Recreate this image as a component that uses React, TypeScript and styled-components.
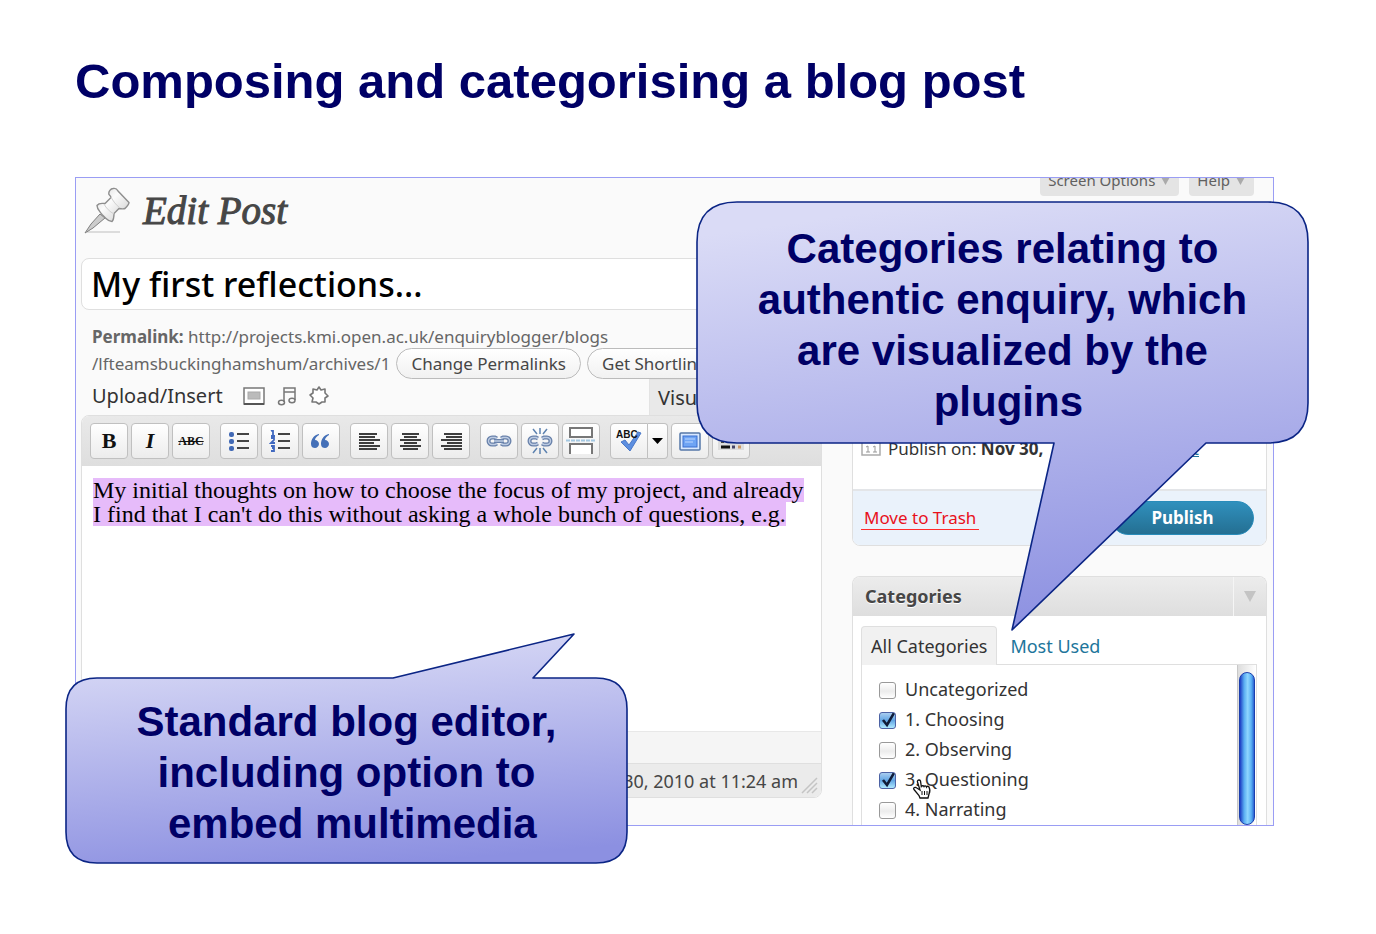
import React, { useState } from "react";
import styled, { createGlobalStyle } from "styled-components";

const UI_FONT = `"Noto Sans", "Open Sans", sans-serif`;
const SLIDE_FONT = `"Liberation Sans", Arial, sans-serif`;
const NAVY = "#000066";

const GlobalStyle = createGlobalStyle`
  *, *::before, *::after { box-sizing: border-box; }
  body { margin: 0; background: #fff; }
  button, input { font: inherit; color: inherit; }
`;

const Slide = styled.main`
  padding: 53px 102px 72px 75px;
  font-family: ${SLIDE_FONT};
`;

const SlideTitle = styled.h1`
  margin: 0 0 68px;
  font-size: 49px;
  line-height: 56px;
  font-weight: 700;
  color: ${NAVY};
`;

const Figure = styled.section`
  position: relative;
`;

const Screen = styled.div`
  border: 1px solid #9a9df4;
  background: #fafafa;
  font-family: ${UI_FONT};
  font-size: 17px;
  color: #333;
  overflow: hidden;
`;

const ScreenHeader = styled.header`
  display: flex;
  justify-content: space-between;
  align-items: flex-start;
  height: 80px;
  padding: 0 19px 0 8px;
`;

const PageHeading = styled.h2`
  display: flex;
  align-items: center;
  gap: 13px;
  margin: 8px 0 0;
  font-family: "Liberation Serif", Georgia, serif;
  font-size: 39px;
  line-height: 50px;
  font-style: italic;
  font-weight: 400;
  color: #464646;
  -webkit-text-stroke: 1px #464646;
`;

const MetaTabs = styled.div`
  display: flex;
  align-items: flex-end;
  gap: 10px;
  height: 18px;
`;

const MetaTab = styled.button`
  display: flex;
  align-items: center;
  gap: 5px;
  padding: 0 8px 5px;
  border: 0;
  border-radius: 0 0 4px 4px;
  background: #e4e4e4;
  font-size: 15px;
  line-height: 22px;
  color: #606060;
`;

const Columns = styled.div`
  display: grid;
  grid-template-columns: minmax(0, 1fr) 415px;
  gap: 30px;
  padding: 0 6px 0 5px;
`;

const MainColumn = styled.div`
  padding-bottom: 27px;
`;

const TitleInput = styled.input`
  display: block;
  width: 100%;
  height: 52px;
  margin-bottom: 13px;
  padding: 0 9px;
  border: 1px solid #dfdfdf;
  border-radius: 8px;
  background: #fff;
  font-size: 34px;
  font-weight: 500;
  color: #000;
`;

const Permalink = styled.div`
  padding-left: 11px;
  line-height: 27px;
  color: #666;
`;

const PermalinkRow = styled.div`
  display: flex;
  align-items: center;
  gap: 6px;
  height: 27px;
`;

const PillButton = styled.button`
  flex: none;
  height: 31px;
  padding: 0 14px;
  border: 1px solid #bbb;
  border-radius: 16px;
  background: linear-gradient(#fff, #f1f1f1);
  line-height: 27px;
  color: #464646;
`;

const MediaRow = styled.div`
  display: flex;
  align-items: center;
  height: 38px;
  padding-left: 11px;
  font-size: 20px;
`;

const MediaLabel = styled.span`
  margin-right: 20px;
  line-height: 36px;
  color: #333;
`;

const IconButton = styled.button`
  display: flex;
  margin-right: 12px;
  padding: 0;
  border: 0;
  background: none;
`;

const EditorTabs = styled.div`
  align-self: flex-end;
  width: 173px;
  margin-left: auto;
`;

const EditorTab = styled.button`
  height: 36px;
  padding: 0 8px;
  border: 1px solid #e3e3e3;
  border-bottom: 0;
  background: #e9e9e9;
  color: #333;
`;

const Editor = styled.div`
  border: 1px solid #dfdfdf;
  border-radius: 8px;
  background: #fff;
  overflow: hidden;
`;

const Toolbar = styled.div`
  display: flex;
  align-items: center;
  gap: 10px;
  height: 50px;
  padding: 0 8px;
  background: linear-gradient(#e9e9e9, #dedede);
`;

const ToolGroup = styled.div<{ $gap?: number }>`
  display: flex;
  gap: ${(p) => p.$gap ?? 3}px;
`;

const ToolButton = styled.button<{ $side?: "left" | "right" }>`
  display: flex;
  align-items: center;
  justify-content: center;
  width: ${(p) => (p.$side === "right" ? 20 : 38)}px;
  height: 36px;
  padding: 0;
  border: 1px solid #c0c0c0;
  border-left-width: ${(p) => (p.$side === "right" ? 0 : 1)}px;
  border-radius: ${(p) =>
    p.$side === "left" ? "4px 0 0 4px" : p.$side === "right" ? "0 4px 4px 0" : "4px"};
  background: linear-gradient(#fff, #ececec);
`;

const Glyph = styled.span<{ $italic?: boolean; $small?: boolean }>`
  font-family: "Liberation Serif", serif;
  font-size: ${(p) => (p.$small ? 12 : 22)}px;
  line-height: 24px;
  font-weight: 700;
  font-style: ${(p) => (p.$italic ? "italic" : "normal")};
  text-decoration: ${(p) => (p.$small ? "line-through" : "none")};
  color: #111;
`;

const EditArea = styled.div`
  height: 265px;
  padding: 12px 11px;
  font-family: "Liberation Serif", "Times New Roman", serif;
  font-size: 24px;
  line-height: 24px;
  color: #000;
  outline: none;
`;

const SelectedLine = styled.mark`
  display: block;
  width: fit-content;
  background: #e6bbfa;
  color: inherit;
  white-space: nowrap;
`;

const PathBar = styled.div`
  height: 32px;
  border-top: 1px solid #e8e8e8;
  background: #f5f5f5;
`;

const StatusBar = styled.div`
  display: flex;
  align-items: center;
  justify-content: flex-end;
  height: 34px;
  padding: 0 2px 0 11px;
  border-top: 1px solid #dfdfdf;
  background: #ebebeb;
  gap: 3px;
  font-size: 18px;
  color: #464646;
`;

const SideColumn = styled.aside`
  display: flex;
  flex-direction: column;
  gap: 30px;
`;

const PublishBox = styled.section`
  display: flex;
  flex-direction: column;
  justify-content: flex-end;
  height: 288px;
  border: 1px solid #dfdfdf;
  border-radius: 8px;
  background: #fff;
  overflow: hidden;
`;

const ScheduleRow = styled.div`
  display: flex;
  align-items: center;
  gap: 7px;
  height: 24px;
  margin-bottom: 29px;
  padding: 0 67px 0 8px;
`;

const ScheduleTime = styled.b`
  margin-left: 11px;
`;

const EditLink = styled.a`
  margin-left: auto;
  color: #21759b;
`;

const PublishFooter = styled.footer`
  display: flex;
  align-items: center;
  justify-content: space-between;
  height: 56px;
  padding: 0 12px 0 8px;
  border-top: 2px solid #e3e5e8;
  background: #eaf2fb;
`;

const TrashLink = styled.a`
  padding: 0 3px;
  border-bottom: 1px solid #ff2b2b;
  line-height: 23px;
  text-decoration: none;
  color: #e8111c;
`;

const PublishButton = styled.button`
  width: 143px;
  height: 34px;
  padding: 0;
  border: 1px solid #298cba;
  border-radius: 17px;
  background: linear-gradient(#3090bd, #246f92);
  font-weight: 700;
  line-height: 30px;
  color: #fff;
`;

const CategoryBox = styled.section`
  flex: 1;
  border: 1px solid #dfdfdf;
  border-bottom: 0;
  border-radius: 8px 8px 0 0;
  background: #fff;
`;

const BoxHeader = styled.header`
  display: flex;
  align-items: stretch;
  justify-content: space-between;
  height: 39px;
  border-radius: 7px 7px 0 0;
  background: linear-gradient(#ececec, #dedede);
`;

const BoxTitle = styled.h3`
  margin: 0;
  padding-left: 12px;
  font-size: 18px;
  line-height: 38px;
  font-weight: 700;
  color: #464646;
  text-shadow: 0 1px 0 #fff;
`;

const BoxToggle = styled.button`
  display: flex;
  align-items: center;
  justify-content: center;
  width: 33px;
  padding: 0;
  border: 0;
  border-left: 1px solid #f5f5f5;
  background: none;
`;

const CategoryTabs = styled.div`
  display: flex;
  padding: 10px 9px 0 8px;
  font-size: 18px;
`;

const CategoryTab = styled.button<{ $active?: boolean }>`
  height: 39px;
  margin-bottom: -1px;
  padding: 0 ${(p) => (p.$active ? 9 : 12)}px;
  border: 1px solid ${(p) => (p.$active ? "#dfdfdf" : "transparent")};
  border-bottom: 0;
  border-radius: 4px 4px 0 0;
  background: ${(p) => (p.$active ? "#f1f1f1" : "transparent")};
  color: ${(p) => (p.$active ? "#333" : "#21759b")};
`;

const CategoryPanel = styled.div`
  display: flex;
  justify-content: space-between;
  margin: 0 9px 0 8px;
  border: 1px solid #dfdfdf;
  border-bottom: 0;
`;

const CategoryList = styled.ul`
  margin: 0;
  padding: 9px 0 1px 17px;
  list-style: none;
`;

const CategoryItem = styled.li`
  position: relative;
`;

const CategoryLabel = styled.label`
  display: flex;
  align-items: center;
  gap: 9px;
  height: 30px;
  font-size: 18px;
  line-height: 30px;
  color: #333;
`;

const CHECK = `url("data:image/svg+xml,%3Csvg xmlns='http://www.w3.org/2000/svg' viewBox='0 0 17 17'%3E%3Cpath d='M4 8l4 5L15 1' fill='none' stroke='%23101c38' stroke-width='2.6'/%3E%3C/svg%3E")`;

const CheckBox = styled.input`
  appearance: none;
  width: 17px;
  height: 17px;
  margin: 3px 0 0;
  border: 1px solid #999;
  border-radius: 3px;
  background: linear-gradient(#fff, #ececec 55%, #fff);
  &:checked {
    border-color: #4c62a4;
    background: ${CHECK} center / 17px 17px, linear-gradient(#a9cdf0, #62a6e4 50%, #aee9ff);
  }
`;

const HandCursor = styled.svg`
  position: absolute;
  left: 33px;
  top: 15px;
  z-index: 1;
`;

const ScrollTrack = styled.div`
  width: 19px;
  padding: 7px 1px 0;
  border-left: 1px solid #c8c8c8;
  background: linear-gradient(90deg, #ddd, #fff);
`;

const ScrollThumb = styled.div`
  height: 100%;
  border: 1px solid #1c3fae;
  border-radius: 9px;
  background: linear-gradient(90deg, #1d3cc4, #5aaef2 30%, #8fd6ff 55%, #5bb2f4 80%, #2a63d4);
`;

const Callout = styled.aside<{ $w: number; $h: number; $pad: string }>`
  position: absolute;
  z-index: 2;
  width: ${(p) => p.$w}px;
  height: ${(p) => p.$h}px;
  padding: ${(p) => p.$pad};
`;

const CategoriesCallout = styled(Callout)`
  top: 24px;
  right: -35px;
`;

const EditorCallout = styled(Callout)`
  top: 456px;
  left: -10px;
`;

const Balloon = styled.svg`
  position: absolute;
  inset: 0;
`;

const CalloutText = styled.p`
  position: relative;
  margin: 0;
  font-size: 42px;
  line-height: 51px;
  font-weight: 700;
  text-align: center;
  white-space: pre-line;
  color: ${NAVY};
`;

const Pin = () => (
  <svg width="46" height="48" viewBox="0 0 46 48" aria-hidden="true">
    <defs>
      <linearGradient id="pin" x1="0" y1="0" x2="1" y2="1">
        <stop offset="0" stopColor="#d4d4d4" />
        <stop offset=".4" stopColor="#fbfbfb" />
        <stop offset=".7" stopColor="#e2e2e2" />
        <stop offset="1" stopColor="#b4b4b4" />
      </linearGradient>
    </defs>
    <path d="M3 45h33" stroke="#dcdcdc" strokeWidth="2" />
    <path d="M16 27L7 37 1 46l8-5 12-10z" fill="#ccc" stroke="#808080" />
    <path
      d="M29 1.5c-2 0-5 3-4 6 1 1 2 2 2 3l-6 6c-3 0-6-1-8 2 0 4 3 6 5 9l4 4c2 2 4 3 6 3 2-2 2-5 2-8l5-5c2 0 4 1 6 0 2-2 4-4 4-6L34 4c-1-2-3-3-5-2.5z"
      fill="url(#pin)"
      stroke="#8e8e8e"
      strokeWidth="1.400"
    />
    <path d="M27 10c2 4 5 8 9 11M20 17c2 4 6 8 10 10" fill="none" stroke="#cfcfcf" />
  </svg>
);

const Down = ({ color = "#aaa", w = 11, h = 10 }: { color?: string; w?: number; h?: number }) => (
  <svg width={w} height={h} viewBox="0 0 11 10" preserveAspectRatio="none" aria-hidden="true">
    <path d="M0 0h11L5.500 10z" fill={color} />
  </svg>
);

const ImageIcon = () => (
  <svg width="22" height="18" viewBox="0 0 22 18" aria-hidden="true">
    <rect x="1" y="1" width="20" height="16" fill="#fff" stroke="#777" strokeWidth="1.500" />
    <path d="M1 17h20" stroke="#555" strokeWidth="2" />
    <rect x="5" y="5" width="12" height="7" fill="#bbb" stroke="#aaa" />
  </svg>
);

const MusicIcon = () => (
  <svg width="20" height="20" viewBox="0 0 20 20" fill="none" stroke="#777" strokeWidth="1.500" aria-hidden="true">
    <path d="M7 16V2h11v12M7 6h11" />
    <ellipse cx="4.500" cy="16.500" rx="3" ry="2.200" />
    <ellipse cx="15" cy="14.500" rx="3" ry="2.200" />
  </svg>
);

const GearIcon = () => (
  <svg width="20" height="20" viewBox="0 0 20 20" fill="#fff" stroke="#777" strokeWidth="1.600" aria-hidden="true">
    <path d="M10 1l2 3 4-1v4l3 3-3 2 0 4-3 0-3 2-3-2-4 0 1-4-3-3 3-2 0-4 4 1z" strokeLinejoin="round" />
  </svg>
);

const ListIcon = ({ numbered }: { numbered?: boolean }) => (
  <svg width="22" height="22" viewBox="0 0 22 22" aria-hidden="true">
    <path d="M9 4h12M9 11h12M9 18h12" stroke="#444" strokeWidth="2" />
    {numbered ? (
      <path
        d="M2 1l2-1v6M2 6h4M2 8h3v2l-3 3h4M2 16h3v5H2M3 18h2"
        fill="none"
        stroke="#4169c0"
        strokeWidth="1.800"
      />
    ) : (
      <g fill="#4169b5">
        <rect x="1" y="2" width="5" height="5" rx="2" />
        <rect x="1" y="9" width="5" height="5" rx="2" />
        <rect x="1" y="16" width="5" height="5" rx="2" />
      </g>
    )}
  </svg>
);

const QuoteIcon = () => (
  <svg width="20" height="16" viewBox="0 0 20 16" fill="#4470b8" aria-hidden="true">
    <path d="M8 1C3 2 0 6 0 11c0 3 2 4 4 4s4-2 4-4-2-4-4-4c0-2 2-4 4-5zM18 1c-5 1-8 5-8 10 0 3 2 4 4 4s4-2 4-4-2-4-4-4c0-2 2-4 4-5z" />
  </svg>
);

const ALIGN = {
  left: "M0 2h18M0 5h16M0 8h21M0 11h15M0 14h21M0 17h18",
  center: "M2 2h17M4 5h13M0 8h21M4 11h13M0 14h21M3 17h15",
  right: "M3 2h18M5 5h16M0 8h21M6 11h15M0 14h21M3 17h18",
};
const AlignIcon = ({ side }: { side: keyof typeof ALIGN }) => (
  <svg width="21" height="19" viewBox="0 0 21 19" aria-hidden="true">
    <path d={ALIGN[side]} stroke="#3d3d3d" strokeWidth="2" />
  </svg>
);

const CHAIN = "M11 10.500L9 9.500H6a3.500 3.500 0 0 0 0 7h3l2-1M15 10.500l2-1h3a3.500 3.500 0 0 1 0 7h-3l-2-1";
const LinkIcon = ({ broken }: { broken?: boolean }) => (
  <svg width="26" height="28" viewBox="0 0 26 26" fill="none" aria-hidden="true">
    <path d={broken ? CHAIN : `${CHAIN}M8 13h10`} stroke="#6881aa" strokeWidth="4" />
    <path d={broken ? CHAIN : `${CHAIN}M8 13h10`} stroke="#bccbe2" strokeWidth="1.400" />
    {broken && (
      <path d="M13 0v6M6 1l4 5M20 1l-4 5M13 20v6M6 25l4-5M20 25l-4-5" stroke="#5e83b0" strokeWidth="1.500" />
    )}
  </svg>
);

const MoreIcon = () => (
  <svg width="30" height="30" viewBox="0 0 30 30" aria-hidden="true">
    <path d="M4 2h22v9H4zM4 28V18h22v10" fill="#fff" stroke="#777" strokeWidth="2" />
    <path d="M0 14.500h30" stroke="#a3c8e2" strokeWidth="2" strokeDasharray="4 1" />
  </svg>
);

const SpellIcon = () => (
  <svg width="28" height="26" viewBox="0 0 28 26" aria-hidden="true">
    <path d="M6 14l4-2 4 5L23 4l3 1-11 18z" fill="#5d8fe0" stroke="#4a78c8" />
    <text x="1" y="10" fontFamily="Liberation Sans" fontWeight="700" fontSize="10" fill="#111">
      ABC
    </text>
  </svg>
);

const FullscreenIcon = () => (
  <svg width="22" height="19" viewBox="0 0 22 19" aria-hidden="true">
    <rect x="1" y="1" width="20" height="17" rx="1" fill="#d8e8ff" stroke="#5577a8" strokeWidth="1.500" />
    <rect x="4" y="4" width="14" height="11" fill="#6ea4f4" stroke="#3a6fd0" />
    <path d="M6 7h10M6 10h8" stroke="#bcd6ff" />
  </svg>
);

const KitchenSinkIcon = () => (
  <svg width="26" height="20" viewBox="0 0 26 20" aria-hidden="true">
    <path d="M0 1h26v18H0z" fill="#ddd" />
    <path d="M3 11h20" stroke="#444" strokeWidth="2" strokeDasharray="3 2" />
    <path d="M3 16h9" stroke="#111" strokeWidth="3" />
    <path d="M14 16h3" stroke="#446" strokeWidth="3" />
    <path d="M20 16h3" stroke="#c96" strokeWidth="3" />
  </svg>
);

const CalendarIcon = () => (
  <svg width="20" height="16" viewBox="0 0 20 16" aria-hidden="true">
    <path d="M1 1h18v14H1z" fill="#fff" stroke="#aaa" strokeWidth="1.500" />
    <path d="M5 7l2-1v6M5 12h4M12 7l2-1v6M12 12h4" fill="none" stroke="#999" />
  </svg>
);

const ResizeGrip = () => (
  <svg width="18" height="30" viewBox="0 0 18 30" aria-hidden="true">
    <path d="M1 27L16 12M6 27l10-10M11 27l5-5" stroke="#c4c4c4" strokeWidth="1.500" />
  </svg>
);

const Hand = () => (
  <HandCursor width="20" height="20" viewBox="0 0 20 20" aria-hidden="true">
    <path
      d="M7 1c-1 0-2 1-1.500 2L8 11 4 8.500c-2-.500-3 1-2 2l5 6 1 2.500h8l1-4c1-2 1-5 0-7-1-1-2-1-2.500 0-.500-1.500-2-1.500-2.500-.500-.500-1-2-1-2.700 0L8.500 2C8 1 7.500 1 7 1z"
      fill="#fff"
      stroke="#111"
      strokeWidth="1.300"
    />
    <path d="M10 12v4M12.500 12v4M15 12v4" stroke="#111" />
  </HandCursor>
);

const BalloonShape = ({ id, w, h, d }: { id: string; w: number; h: number; d: string }) => (
  <Balloon width={w} height={h} viewBox={`0 0 ${w} ${h}`} aria-hidden="true">
    <defs>
      <linearGradient id={id} x1=".4" y1="0" x2=".6" y2="1">
        <stop offset="0" stopColor="#dadbf6" />
        <stop offset="1" stopColor="#8c90e1" />
      </linearGradient>
    </defs>
    <path d={d} fill={`url(#${id})`} stroke="#0b2585" strokeWidth="1.600" strokeLinejoin="round" />
  </Balloon>
);

const CATEGORIES = ["Uncategorized", "1. Choosing", "2. Observing", "3. Questioning", "4. Narrating"];

export default function App() {
  const [title, setTitle] = useState("My first reflections...");
  const [checked, setChecked] = useState<Record<string, boolean>>({
    "1. Choosing": true,
    "3. Questioning": true,
  });

  return (
    <>
      <GlobalStyle />
      <Slide>
        <SlideTitle>Composing and categorising a blog post</SlideTitle>
        <Figure>
          <Screen>
            <ScreenHeader>
              <PageHeading>
                <Pin />
                Edit Post
              </PageHeading>
              <MetaTabs>
                <MetaTab>
                  Screen Options <Down />
                </MetaTab>
                <MetaTab>
                  Help <Down />
                </MetaTab>
              </MetaTabs>
            </ScreenHeader>
            <Columns>
              <MainColumn>
                <TitleInput aria-label="Post title" value={title} onChange={(e) => setTitle(e.target.value)} />
                <Permalink>
                  <PermalinkRow>
                    <span>
                      <b>Permalink:</b> http://projects.kmi.open.ac.uk/enquiryblogger/blogs
                    </span>
                  </PermalinkRow>
                  <PermalinkRow>
                    <span>/lfteamsbuckinghamshum/archives/1</span>
                    <PillButton>Change Permalinks</PillButton>
                    <PillButton>Get Shortlink</PillButton>
                  </PermalinkRow>
                </Permalink>
                <MediaRow>
                  <MediaLabel>Upload/Insert</MediaLabel>
                  <IconButton aria-label="Add an image"><ImageIcon /></IconButton>
                  <IconButton aria-label="Add audio"><MusicIcon /></IconButton>
                  <IconButton aria-label="Add media"><GearIcon /></IconButton>
                  <EditorTabs>
                    <EditorTab>Visual</EditorTab>
                  </EditorTabs>
                </MediaRow>
                <Editor>
                  <Toolbar role="toolbar" aria-label="Formatting">
                    <ToolGroup>
                      <ToolButton aria-label="Bold"><Glyph>B</Glyph></ToolButton>
                      <ToolButton aria-label="Italic"><Glyph $italic>I</Glyph></ToolButton>
                      <ToolButton aria-label="Strikethrough"><Glyph $small>ABC</Glyph></ToolButton>
                    </ToolGroup>
                    <ToolGroup>
                      <ToolButton aria-label="Bulleted list"><ListIcon /></ToolButton>
                      <ToolButton aria-label="Numbered list"><ListIcon numbered /></ToolButton>
                      <ToolButton aria-label="Quote"><QuoteIcon /></ToolButton>
                    </ToolGroup>
                    <ToolGroup>
                      <ToolButton aria-label="Align left"><AlignIcon side="left" /></ToolButton>
                      <ToolButton aria-label="Align center"><AlignIcon side="center" /></ToolButton>
                      <ToolButton aria-label="Align right"><AlignIcon side="right" /></ToolButton>
                    </ToolGroup>
                    <ToolGroup>
                      <ToolButton aria-label="Insert link"><LinkIcon /></ToolButton>
                      <ToolButton aria-label="Remove link"><LinkIcon broken /></ToolButton>
                      <ToolButton aria-label="Insert more tag"><MoreIcon /></ToolButton>
                    </ToolGroup>
                    <ToolGroup>
                      <ToolGroup $gap={0}>
                        <ToolButton $side="left" aria-label="Check spelling"><SpellIcon /></ToolButton>
                        <ToolButton $side="right" aria-label="Spelling language">
                          <Down color="#000" w={11} h={6} />
                        </ToolButton>
                      </ToolGroup>
                      <ToolButton aria-label="Full screen"><FullscreenIcon /></ToolButton>
                      <ToolButton aria-label="More tools"><KitchenSinkIcon /></ToolButton>
                    </ToolGroup>
                  </Toolbar>
                  <EditArea role="textbox" aria-multiline="true" aria-label="Post body" contentEditable suppressContentEditableWarning>
                    <SelectedLine>My initial thoughts on how to choose the focus of my project, and already</SelectedLine>
                    <SelectedLine>I find that I can't do this without asking a whole bunch of questions, e.g.</SelectedLine>
                  </EditArea>
                  <PathBar />
                  <StatusBar>
                    <span>30, 2010 at 11:24 am</span>
                    <ResizeGrip />
                  </StatusBar>
                </Editor>
              </MainColumn>
              <SideColumn>
                <PublishBox>
                  <ScheduleRow>
                    <CalendarIcon />
                    <span>
                      Publish on: <b>Nov 30,</b>
                    </span>
                    <ScheduleTime>2010</ScheduleTime>
                    <EditLink href="#schedule">Edit</EditLink>
                  </ScheduleRow>
                  <PublishFooter>
                    <TrashLink href="#trash">Move to Trash</TrashLink>
                    <PublishButton>Publish</PublishButton>
                  </PublishFooter>
                </PublishBox>
                <CategoryBox>
                  <BoxHeader>
                    <BoxTitle>Categories</BoxTitle>
                    <BoxToggle aria-label="Toggle panel"><Down color="#c4c4c4" w={12} h={11} /></BoxToggle>
                  </BoxHeader>
                  <CategoryTabs>
                    <CategoryTab $active>All Categories</CategoryTab>
                    <CategoryTab>Most Used</CategoryTab>
                  </CategoryTabs>
                  <CategoryPanel>
                    <CategoryList>
                      {CATEGORIES.map((name) => (
                        <CategoryItem key={name}>
                          <CategoryLabel>
                            <CheckBox
                              type="checkbox"
                              checked={!!checked[name]}
                              onChange={(e) => setChecked({ ...checked, [name]: e.target.checked })}
                            />
                            {name}
                          </CategoryLabel>
                          {name === "3. Questioning" && <Hand />}
                        </CategoryItem>
                      ))}
                    </CategoryList>
                    <ScrollTrack>
                      <ScrollThumb />
                    </ScrollTrack>
                  </CategoryPanel>
                </CategoryBox>
              </SideColumn>
            </Columns>
          </Screen>
          <CategoriesCallout $w={613} $h={430} $pad="22px 40px 0">
            <BalloonShape
              id="balloon-categories"
              w={613}
              h={430}
              d="M41 1H572Q612 1 612 41V202Q612 242 572 242H510L316 429 358 242H41Q1 242 1 202V41Q1 1 41 1Z"
            />
            <CalloutText>
              {"Categories relating to\nauthentic enquiry, which\nare visualized by the\n\u00a0plugins"}
            </CalloutText>
          </CategoriesCallout>
          <EditorCallout $w={563} $h={231} $pad="63px 40px 0">
            <BalloonShape
              id="balloon-editor"
              w={563}
              h={231}
              d="M32 45H328L509 1 468 45H531Q562 45 562 76V199Q562 230 531 230H32Q1 230 1 199V76Q1 45 32 45Z"
            />
            <CalloutText>{"Standard blog editor,\nincluding option to\n\u00a0embed multimedia"}</CalloutText>
          </EditorCallout>
        </Figure>
      </Slide>
    </>
  );
}
